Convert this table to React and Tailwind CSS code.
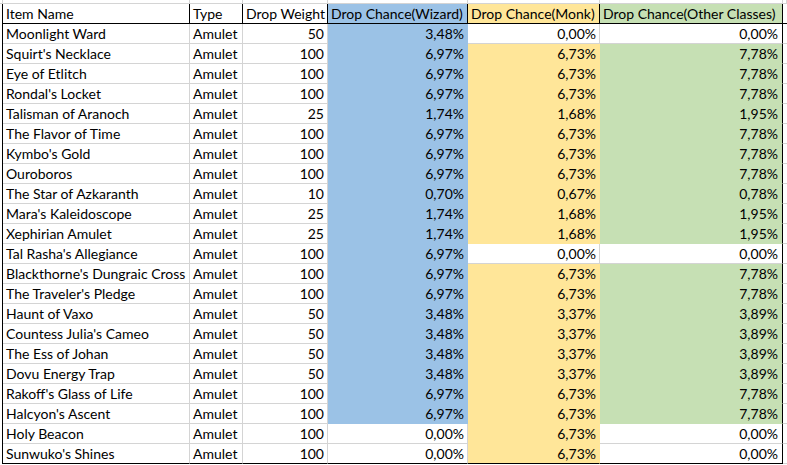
import React from "react";

const rows = [
  ["Moonlight Ward", 50, "3,48%", "0,00%", "0,00%"],
  ["Squirt's Necklace", 100, "6,97%", "6,73%", "7,78%"],
  ["Eye of Etlitch", 100, "6,97%", "6,73%", "7,78%"],
  ["Rondal's Locket", 100, "6,97%", "6,73%", "7,78%"],
  ["Talisman of Aranoch", 25, "1,74%", "1,68%", "1,95%"],
  ["The Flavor of Time", 100, "6,97%", "6,73%", "7,78%"],
  ["Kymbo's Gold", 100, "6,97%", "6,73%", "7,78%"],
  ["Ouroboros", 100, "6,97%", "6,73%", "7,78%"],
  ["The Star of Azkaranth", 10, "0,70%", "0,67%", "0,78%"],
  ["Mara's Kaleidoscope", 25, "1,74%", "1,68%", "1,95%"],
  ["Xephirian Amulet", 25, "1,74%", "1,68%", "1,95%"],
  ["Tal Rasha's Allegiance", 100, "6,97%", "0,00%", "0,00%"],
  ["Blackthorne's Dungraic Cross", 100, "6,97%", "6,73%", "7,78%"],
  ["The Traveler's Pledge", 100, "6,97%", "6,73%", "7,78%"],
  ["Haunt of Vaxo", 50, "3,48%", "3,37%", "3,89%"],
  ["Countess Julia's Cameo", 50, "3,48%", "3,37%", "3,89%"],
  ["The Ess of Johan", 50, "3,48%", "3,37%", "3,89%"],
  ["Dovu Energy Trap", 50, "3,48%", "3,37%", "3,89%"],
  ["Rakoff's Glass of Life", 100, "6,97%", "6,73%", "7,78%"],
  ["Halcyon's Ascent", 100, "6,97%", "6,73%", "7,78%"],
  ["Holy Beacon", 100, "0,00%", "6,73%", "0,00%"],
  ["Sunwuko's Shines", 100, "0,00%", "6,73%", "0,00%"],
];

const cols = "grid grid-cols-[187px_53px_85px_140px_132px_183px_1fr]";

export default function App() {
  return (
    <div
      className="w-[787px] h-[465px] bg-white overflow-hidden text-black text-[14px]"
      style={{ fontFamily: "Lato, 'Open Sans', sans-serif" }}
    >
      {/* top partial row */}
      <div className="flex h-[4px]">
        <div className="w-[3px] border-r border-b border-[#d4d4d4] shrink-0" />
        <div className={`${cols} flex-1`}>
          {[0, 1, 2, 3, 4, 5, 6].map((i) => (
            <div key={i} className="border-r border-b border-[#d4d4d4]" />
          ))}
        </div>
      </div>
      <div className="flex">
        <div className="w-[3px] shrink-0 flex flex-col">
          <div className="h-[20px] border-r border-black" />
          {rows.map((_, i) => (
            <div key={i} className="h-[20px] border-r border-black" />
          ))}
        </div>
        <div className="flex-1 flex flex-col">
          {/* header */}
          <div className={`${cols} h-[20px] leading-[19px]`}>
            <div className="border-r border-b border-black pl-[3px] whitespace-nowrap">Item Name</div>
            <div className="border-r border-b border-black pl-[3px] whitespace-nowrap">Type</div>
            <div className="border-r border-b border-black pl-[3px] whitespace-nowrap">Drop Weight</div>
            <div className="border-r border-b border-black bg-[#9bc2e6] pl-[3px] whitespace-nowrap">Drop Chance(Wizard)</div>
            <div className="border-r border-b border-black bg-[#ffe699] pl-[3px] whitespace-nowrap">Drop Chance(Monk)</div>
            <div className="border-r border-b border-black bg-[#c6e0b4] pl-[3px] whitespace-nowrap">Drop Chance(Other Classes)</div>
            <div className="border-b border-black" />
          </div>
          {rows.map((r, i) => {
            const last = i === rows.length - 1;
            const bb = last ? "border-b-black" : "border-b-[#d4d4d4]";
            const wz = r[2] !== "0,00%";
            const mk = r[3] !== "0,00%";
            const ot = r[4] !== "0,00%";
            return (
              <div key={i} className={`${cols} h-[20px] leading-[19px]`}>
                <div className={`border-r border-b border-r-[#d4d4d4] ${bb} pl-[3px] whitespace-nowrap`}>{r[0]}</div>
                <div className={`border-r border-b border-r-[#d4d4d4] ${bb} pl-[3px] whitespace-nowrap`}>Amulet</div>
                <div className={`border-r border-b border-r-[#d4d4d4] ${bb} pr-[3px] text-right`}>{r[1]}</div>
                <div
                  className={`border-r border-b pr-[3px] text-right ${
                    wz ? `bg-[#9bc2e6] border-r-[#9bc2e6] ${last ? "border-b-black" : "border-b-[#9bc2e6]"}` : `border-r-[#d4d4d4] ${bb}`
                  }`}
                >
                  {r[2]}
                </div>
                <div
                  className={`border-r border-b pr-[3px] text-right ${
                    mk ? `bg-[#ffe699] border-r-[#ffe699] ${last ? "border-b-black" : "border-b-[#ffe699]"}` : `border-r-[#d4d4d4] ${bb}`
                  }`}
                >
                  {r[3]}
                </div>
                <div
                  className={`border-r border-b border-r-black pr-[4px] text-right ${
                    ot ? `bg-[#c6e0b4] ${last ? "border-b-black" : "border-b-[#c6e0b4]"}` : bb
                  }`}
                >
                  {r[4]}
                </div>
                <div className="border-b border-b-[#d4d4d4]" />
              </div>
            );
          })}
        </div>
      </div>
    </div>
  );
}
